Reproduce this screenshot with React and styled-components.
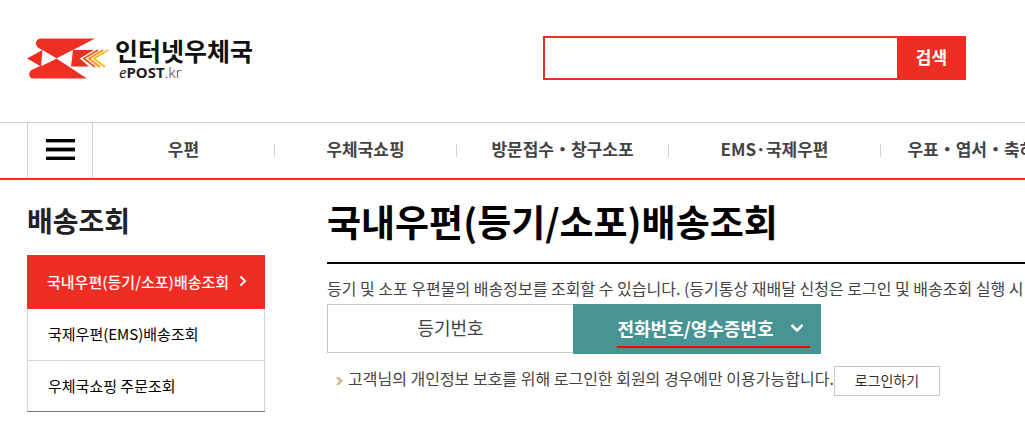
import styled, { createGlobalStyle } from "styled-components"

const GlobalStyle = createGlobalStyle`
*{
    box-sizing:border-box;
}
body{
    margin:0;
    background-color:white;
    color:#444;
    font-family:"Noto Sans CJK KR","Noto Sans",sans-serif;
    font-size:16px;
    overflow-x:hidden;
}
a{
    color:inherit;
    text-decoration:none;
}
button,input{
    font-family:inherit;
    margin:0;
}
`

const Header = styled.header`
display:flex;
align-items:center;
justify-content:space-between;
height:122px;
padding:0 59px 6px 27px;
`
const Logo = styled.a`
display:flex;
align-items:center;
gap:5px;
padding-top:2px;
color:#111;
`
const LogoText = styled.span`
display:flex;
flex-direction:column;
`
const LogoName = styled.strong`
font-size:25px;
line-height:26px;
white-space:nowrap;
`
const LogoSub = styled.span`
font-family:"Noto Sans",sans-serif;
font-size:15px;
line-height:18px;
padding-left:4px;
color:#222;
>span{
    font-weight:300;
    color:#444;
}
`
const Search = styled.form`
display:flex;
width:423px;
height:44px;
`
const SearchInput = styled.input`
flex:1;
min-width:0;
padding:0 12px;
border:2px solid #f02d25;
border-right:0;
border-radius:0;
outline:none;
font-size:16px;
`
const SearchButton = styled.button`
width:69px;
padding:0 0 4px;
border:0;
background-color:#f02d25;
color:white;
font-size:17px;
font-weight:bold;
`
const Nav = styled.nav`
display:flex;
height:58px;
padding-left:27px;
border-top:1px solid #d2d2d2;
border-bottom:2px solid #f02d25;
overflow:hidden;
`
const MenuButton = styled.button`
display:flex;
align-items:center;
justify-content:center;
flex:none;
width:66px;
padding:0 0 2px;
border:solid #d2d2d2;
border-width:0 1px;
background-color:white;
`
const NavList = styled.ul`
display:flex;
align-items:center;
margin:0;
padding:0;
list-style:none;
`
const NavItem = styled.li`
flex:none;
width:${props => props.$wide ? "212px" : "182px"};
height:13px;
display:flex;
align-items:center;
justify-content:center;
border-right:1px solid #d2d2d2;
color:#444;
font-size:17px;
font-weight:bold;
white-space:nowrap;
&:last-child{
    border-right:0;
}
>a{
    padding-bottom:4px;
}
`
const Body = styled.div`
display:flex;
gap:62px;
padding-left:27px;
overflow:hidden;
`
const Side = styled.aside`
flex:none;
width:238px;
`
const SideTitle = styled.h2`
margin:0;
padding-top:20px;
height:75px;
color:#222;
font-size:28px;
line-height:40px;
`
const SideMenu = styled.ul`
margin:0;
padding:0;
list-style:none;
border-bottom:1px solid #777;
`
const SideLink = styled.a`
display:flex;
align-items:center;
justify-content:space-between;
height:${props => props.$active ? "54px" : "51px"};
padding:0 18px 2px 20px;
border:solid #d8d8d8;
border-width:${props => props.$active ? "0" : "0 1px"};
background-color:${props => props.$active ? "#f02d25" : "white"};
color:${props => props.$active ? "white" : "#000"};
font-size:15px;
font-weight:${props => props.$active ? "500" : "400"};
white-space:nowrap;
li + li + li > &{
    border-top-width:1px;
}
`
const Content = styled.main`
flex:1;
min-width:0;
`
const Title = styled.h1`
margin:0;
padding-top:15px;
height:84px;
border-bottom:2px solid #000;
color:#000;
font-size:37px;
line-height:52px;
white-space:nowrap;
`
const Description = styled.p`
margin:0;
padding-top:12px;
height:40px;
line-height:24px;
white-space:nowrap;
`
const Tabs = styled.div`
display:flex;
align-items:flex-start;
`
const Tab = styled.button`
display:flex;
align-items:center;
justify-content:center;
gap:16px;
position:relative;
width:${props => props.$active ? "248px" : "246px"};
height:${props => props.$active ? "50px" : "49px"};
padding:${props => props.$active ? "0 17px 2px 44px" : "0 0 4px"};
border:solid #c8c8c8;
border-width:${props => props.$active ? "0" : "1px 0 1px 1px"};
background-color:${props => props.$active ? "#479494" : "white"};
color:${props => props.$active ? "white" : "#444"};
font-size:18px;
font-weight:${props => props.$active ? "bold" : "400"};
white-space:nowrap;
`
const Underline = styled.span`
position:absolute;
left:44px;
right:11px;
bottom:6px;
height:2px;
background-color:#f00;
`
const Notice = styled.div`
display:flex;
align-items:center;
padding:12px 0 16px 9px;
white-space:nowrap;
`
const NoticeText = styled.p`
margin:0 0 0 5px;
line-height:24px;
padding-bottom:6px;
`
const LoginButton = styled.button`
width:106px;
height:30px;
padding:0 0 2px;
border:1px solid #c8c8c8;
background-color:white;
color:#333;
font-size:14px;
`

const navItems = [
    { name: "우편" },
    { name: "우체국쇼핑" },
    { name: "방문접수・창구소포", wide: true },
    { name: "EMS·국제우편", wide: true },
    { name: "우표・엽서・축하카드", wide: true },
]

const sideItems = ["국내우편(등기/소포)배송조회", "국제우편(EMS)배송조회", "우체국쇼핑 주문조회"]

const LogoMark = () => {
    return(
        <svg width="83" height="42" viewBox="0 0 83 42" aria-hidden="true">
            <g fill="#ee3024">
                <path d="M14 .5H68L29.5 20.5 11 9.5C7 6 9 .5 14 .5Z"/>
                <path d="M29.5 20.5 60 40.5H6C1.500 40.500 1 34.500 4.500 32Z"/>
                <path d="M0 20.500 15.500 12 14 28.500Z"/>
                <path d="M46 12H67L53 20.500 62 28.500H44Z"/>
            </g>
            <path d="M16 12.500 29.500 20.500 14.500 28Z M45.500 12.500 29.500 20.500 43.500 28Z" fill="white"/>
            <g fill="none" strokeWidth="2">
                <path d="M69 12 55 20.500 66 29" stroke="white"/>
                <path d="M71 12 57 20.500 68 29" stroke="#ee5a24"/>
                <path d="M76 12 62 20.500 73 29" stroke="#f7941d"/>
                <path d="M81 12 67 20.500 78 29" stroke="#fdbd1e"/>
            </g>
        </svg>
    )
}

const App = () => {
    return(
        <>
            <GlobalStyle/>
            <Header>
                <Logo href="#">
                    <LogoMark/>
                    <LogoText>
                        <LogoName>인터넷우체국</LogoName>
                        <LogoSub><em>e</em><b>POST</b><span>.kr</span></LogoSub>
                    </LogoText>
                </Logo>
                <Search onSubmit={e => e.preventDefault()}>
                    <SearchInput type="text" aria-label="검색어"/>
                    <SearchButton type="submit">검색</SearchButton>
                </Search>
            </Header>
            <Nav>
                <MenuButton type="button" aria-label="전체메뉴">
                    <svg width="29" height="21" viewBox="0 0 29 21" aria-hidden="true">
                        <path d="M0 0H29V3H0Z M0 9H29V12H0Z M0 18H29V21H0Z" fill="#000"/>
                        <path d="M0 3H29V4H0Z M0 8H29V9H0Z M0 12H29V13H0Z M0 17H29V18H0Z" fill="#999"/>
                    </svg>
                </MenuButton>
                <NavList>
                    {navItems.map(item => (
                        <NavItem key={item.name} $wide={item.wide}><a href="#">{item.name}</a></NavItem>
                    ))}
                </NavList>
            </Nav>
            <Body>
                <Side>
                    <SideTitle>배송조회</SideTitle>
                    <SideMenu>
                        {sideItems.map((name, i) => (
                            <li key={name}>
                                <SideLink href="#" $active={i === 0}>
                                    {name}
                                    {i === 0 && (
                                        <svg width="8" height="12" viewBox="0 0 8 12" aria-hidden="true">
                                            <path d="M1.500 1.500 6 6 1.500 10.500" fill="none" stroke="white" strokeWidth="2"/>
                                        </svg>
                                    )}
                                </SideLink>
                            </li>
                        ))}
                    </SideMenu>
                </Side>
                <Content>
                    <Title>국내우편(등기/소포)배송조회</Title>
                    <Description>등기 및 소포 우편물의 배송정보를 조회할 수 있습니다. (등기통상 재배달 신청은 로그인 및 배송조회 실행 시 가능합니다.)</Description>
                    <Tabs role="tablist">
                        <Tab type="button" role="tab" aria-selected="false">등기번호</Tab>
                        <Tab type="button" role="tab" aria-selected="true" $active>
                            전화번호/영수증번호
                            <svg width="14" height="10" viewBox="0 0 14 10" aria-hidden="true">
                                <path d="M1.500 2 7 7.500 12.500 2" fill="none" stroke="white" strokeWidth="2.500"/>
                            </svg>
                            <Underline/>
                        </Tab>
                    </Tabs>
                    <Notice>
                        <svg width="7" height="8" viewBox="0 0 7 8" aria-hidden="true">
                            <path d="M0 0H3L7 4 3 8H0L3 4Z" fill="#e3b491"/>
                        </svg>
                        <NoticeText>고객님의 개인정보 보호를 위해 로그인한 회원의 경우에만 이용가능합니다.</NoticeText>
                        <LoginButton type="button">로그인하기</LoginButton>
                    </Notice>
                </Content>
            </Body>
        </>
    )
}
export default App;
